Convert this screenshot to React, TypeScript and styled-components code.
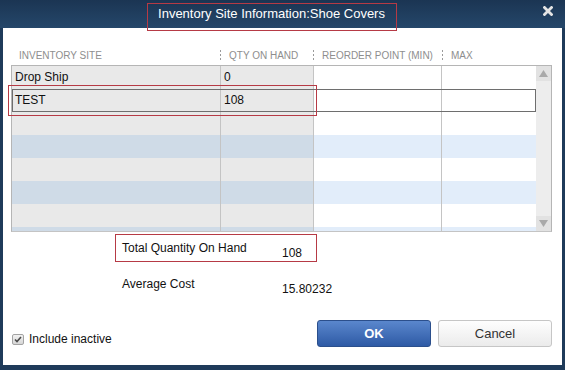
import styled, { createGlobalStyle } from "styled-components";

const GlobalStyle = createGlobalStyle`
  html, body {
    margin: 0;
    padding: 0;
    background: #1f3b5a;
  }
  body {
    font-family: "Liberation Sans", Arial, sans-serif;
  }
`;

const Window = styled.div`
  width: 565px;
  height: 370px;
  box-sizing: border-box;
  display: flex;
  flex-direction: column;
  background: #1f3b5a;
  padding: 0 3px 5px 3px;
`;

const TitleBar = styled.div`
  position: relative;
  height: 28px;
  flex-shrink: 0;
  margin: 0 -3px;
  padding-right: 12px;
  display: flex;
  align-items: center;
  background: linear-gradient(#1b3553, #25476a);
`;

const Title = styled.div`
  flex: 1;
  text-align: center;
  color: #fff;
  font-size: 13px;
  padding-bottom: 2px;
`;

const CloseButton = styled.div`
  width: 10px;
  height: 10px;
  display: flex;
  margin-top: -7px;
`;

// red annotation boxes drawn on top of the dialog
interface IMark {
  left: number;
  top: number;
  w: number;
  h: number;
}
const Mark = styled.div<IMark>`
  position: absolute;
  left: ${(p) => p.left}px;
  top: ${(p) => p.top}px;
  width: ${(p) => p.w}px;
  height: ${(p) => p.h}px;
  box-sizing: border-box;
  border: 1px solid #b63a45;
  z-index: 2;
  pointer-events: none;
`;

const Body = styled.div`
  flex: 1;
  background: #fff;
  display: flex;
  flex-direction: column;
  padding: 19px 10px 18px 8px;
  min-height: 0;
`;

const HeaderRow = styled.div`
  display: grid;
  grid-template-columns: 209px 93px 129px 1fr;
  height: 18px;
  align-items: center;
  padding-bottom: 0;
`;

interface IHead {
  sep?: boolean;
}
const HeadCell = styled.div<IHead>`
  position: relative;
  font-size: 10px;
  color: #8e8e8e;
  padding-left: ${(p) => (p.sep ? 9 : 8)}px;
  white-space: nowrap;
  line-height: 12px;
  &::before {
    content: "";
    display: ${(p) => (p.sep ? "block" : "none")};
    position: absolute;
    left: 0;
    top: 0;
    width: 1px;
    height: 11px;
    background: repeating-linear-gradient(#9a9a9a 0 2px, transparent 2px 4px);
  }
`;

const TableWrap = styled.div`
  position: relative;
`;

const Table = styled.div`
  height: 167px;
  box-sizing: border-box;
  border: 1px solid #b5b5b5;
  border-bottom-color: #c4c4c4;
  display: flex;
`;

const Rows = styled.div`
  flex: 1;
  overflow: hidden;
`;

interface IRow {
  selected?: boolean;
}
const Row = styled.div<IRow>`
  position: relative;
  display: grid;
  grid-template-columns: 209px 93px 128px 1fr;
  height: 23px;
  &::after {
    content: "";
    display: ${(p) => (p.selected ? "block" : "none")};
    position: absolute;
    inset: 0;
    border: 1px solid #6e6e6e;
  }
`;

interface ICell {
  locked?: boolean;
  striped?: boolean;
  last?: boolean;
}
const Cell = styled.div<ICell>`
  box-sizing: border-box;
  border-right: ${(p) => (p.last ? "none" : "1px solid #c4c4c4")};
  background: ${(p) =>
    p.locked
      ? p.striped
        ? "#cfdbe7"
        : "#e9e9e9"
      : p.striped
      ? "#e2edfa"
      : "#fff"};
  font-size: 12px;
  color: #111;
  padding-left: 3px;
  line-height: 23px;
  white-space: nowrap;
`;

const ScrollBar = styled.div`
  width: 15px;
  display: flex;
  flex-direction: column;
  justify-content: space-between;
  background: #ededed;
`;

const ScrollArrow = styled.div`
  height: 15px;
  display: flex;
  align-items: center;
  justify-content: center;
  background: #e2e2e2;
`;

const Summary = styled.div`
  position: relative;
  margin-top: 4px;
  padding-left: 111px;
  display: grid;
  grid-template-columns: 160px auto;
  grid-auto-rows: 29px;
  row-gap: 7px;
  font-size: 12px;
  color: #111;
`;

const SumLabel = styled.div`
  align-self: start;
  line-height: 24px;
`;

const SumValue = styled.div`
  align-self: end;
  line-height: 24px;
`;

const Footer = styled.div`
  margin-top: auto;
  display: flex;
  align-items: flex-end;
  gap: 7px;
`;

const CheckLabel = styled.label`
  display: flex;
  align-items: center;
  gap: 5px;
  margin-left: 1px;
  margin-right: auto;
  font-size: 12px;
  line-height: 16px;
  color: #111;
`;

const CheckBox = styled.span`
  width: 12px;
  height: 11px;
  box-sizing: border-box;
  border: 1px solid #a3a3a3;
  border-radius: 2px;
  background: linear-gradient(#f2f2f2, #d6d6d6);
  display: flex;
  align-items: center;
  justify-content: center;
`;

interface IButton {
  primary?: boolean;
}
const Button = styled.button<IButton>`
  width: 114px;
  height: 27px;
  box-sizing: border-box;
  border-radius: 3px;
  font-family: "Liberation Sans", Arial, sans-serif;
  font-size: 13px;
  font-weight: ${(p) => (p.primary ? 700 : 400)};
  color: ${(p) => (p.primary ? "#fff" : "#333")};
  border: 1px solid ${(p) => (p.primary ? "#2b4f8c" : "#c6c6c6")};
  background: ${(p) =>
    p.primary
      ? "linear-gradient(#5a87cd, #2e5aa5)"
      : "linear-gradient(#fefefe, #ebebeb)"};
  padding: 0;
`;

const rows = [
  { site: "Drop Ship", qty: "0" },
  { site: "TEST", qty: "108", selected: true },
  {},
  {},
  {},
  {},
  {},
  {},
];

const App = () => {
  return (
    <Window>
      <GlobalStyle />
      <TitleBar>
        <Title>Inventory Site Information:Shoe Covers</Title>
        <CloseButton>
          <svg width="10" height="10" viewBox="0 0 10 10">
            <path
              d="M1.5 1.5 L8.5 8.5 M8.5 1.5 L1.5 8.5"
              stroke="#e4e4e4"
              strokeWidth="2.8"
              strokeLinecap="square"
            />
          </svg>
        </CloseButton>
        <Mark left={147} top={3} w={250} h={28} />
      </TitleBar>
      <Body>
        <HeaderRow>
          <HeadCell>INVENTORY SITE</HeadCell>
          <HeadCell sep>QTY ON HAND</HeadCell>
          <HeadCell sep>REORDER POINT (MIN)</HeadCell>
          <HeadCell sep>MAX</HeadCell>
        </HeaderRow>
        <TableWrap>
          <Table>
            <Rows>
              {rows.map((r: any, i) => {
                const striped = i >= 3 && i % 2 === 1;
                return (
                  <Row key={i} selected={r.selected}>
                    <Cell locked striped={striped}>
                      {r.site}
                    </Cell>
                    <Cell locked striped={striped}>
                      {r.qty}
                    </Cell>
                    <Cell striped={striped} />
                    <Cell striped={striped} last />
                  </Row>
                );
              })}
            </Rows>
            <ScrollBar>
              <ScrollArrow>
                <svg width="9" height="7" viewBox="0 0 9 7">
                  <path d="M4.5 0 L9 7 L0 7 Z" fill="#a9a9a9" />
                </svg>
              </ScrollArrow>
              <ScrollArrow>
                <svg width="9" height="7" viewBox="0 0 9 7">
                  <path d="M0 0 L9 0 L4.5 7 Z" fill="#a9a9a9" />
                </svg>
              </ScrollArrow>
            </ScrollBar>
          </Table>
          <Mark left={-3} top={20} w={309} h={31} />
        </TableWrap>
        <Summary>
          <SumLabel>Total Quantity On Hand</SumLabel>
          <SumValue>108</SumValue>
          <SumLabel>Average Cost</SumLabel>
          <SumValue>15.80232</SumValue>
          <Mark left={104} top={-2} w={202} h={28} />
        </Summary>
        <Footer>
          <CheckLabel>
            <CheckBox>
              <svg width="8" height="7" viewBox="0 0 8 7">
                <path
                  d="M1 3.5 L3 5.5 L7 1"
                  stroke="#4a4a4a"
                  strokeWidth="1.6"
                  fill="none"
                />
              </svg>
            </CheckBox>
            Include inactive
          </CheckLabel>
          <Button primary>OK</Button>
          <Button>Cancel</Button>
        </Footer>
      </Body>
    </Window>
  );
};

export default App;
